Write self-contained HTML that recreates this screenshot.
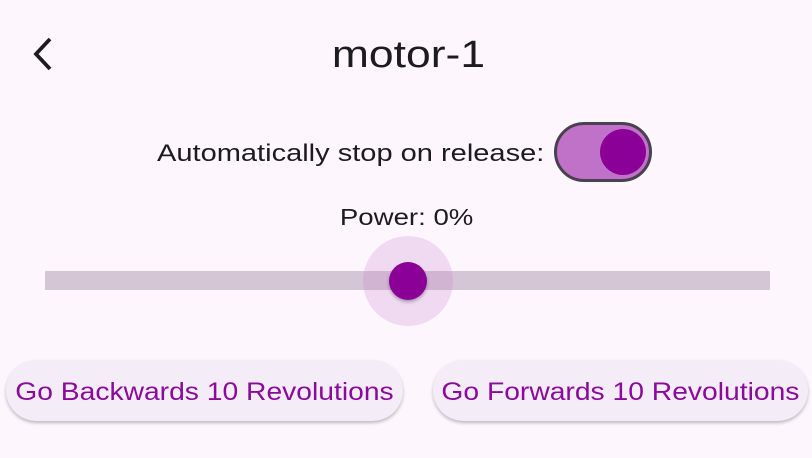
<!DOCTYPE html>
<html><head><style>
body{margin:0;width:812px;height:458px;background:#fdf7fd;font-family:"Liberation Sans",sans-serif;position:relative;overflow:hidden;color:#1d1b20}
.a{position:absolute}
.s{display:inline-block;white-space:nowrap}
.btn{position:absolute;top:360px;height:61px;border-radius:31px;background:#f4ecf7;box-shadow:0 2px 3px rgba(0,0,0,0.25);color:#8b0a9c;font-size:25px;display:flex;align-items:center;justify-content:center;white-space:nowrap;padding-top:3px;box-sizing:border-box}
</style></head><body>
<svg class="a" style="left:26px;top:34px" width="32" height="40"><path d="M24 5 L10 20 L24 35" stroke="#1d1b20" stroke-width="3.8" fill="none"/></svg>
<div class="a" style="left:0;width:816px;top:34px;text-align:center;font-size:38px"><span class="s" style="transform:scaleX(1.17)">motor-1</span></div>
<div class="a" style="left:157px;top:140px;font-size:24.5px;white-space:nowrap;transform:scaleX(1.185);transform-origin:left"><span class="s">Automatically stop on release:</span></div>
<div class="a" style="left:554px;top:122px;width:92px;height:54px;border:3px solid #4a4050;border-radius:30px;background:#bf72c8"></div>
<div class="a" style="left:600px;top:129px;width:46px;height:46px;border-radius:50%;background:#8b0096"></div>
<div class="a" style="left:0;width:814px;top:204px;text-align:center;font-size:23px"><span class="s" style="transform:scaleX(1.2)">Power: 0%</span></div>
<div class="a" style="left:45px;top:271px;width:725px;height:19px;background:#d5c6d5"></div>
<div class="a" style="left:363px;top:236px;width:90px;height:90px;border-radius:50%;background:rgba(190,120,200,0.22)"></div>
<div class="a" style="left:389px;top:262px;width:38px;height:38px;border-radius:50%;background:#8b0096;box-shadow:0 2px 3px rgba(0,0,0,0.3)"></div>
<div class="btn" style="left:6px;width:397px"><span class="s" style="transform:scaleX(1.13)">Go Backwards 10 Revolutions</span></div>
<div class="btn" style="left:433px;width:375px"><span class="s" style="transform:scaleX(1.13)">Go Forwards 10 Revolutions</span></div>
</body></html>
